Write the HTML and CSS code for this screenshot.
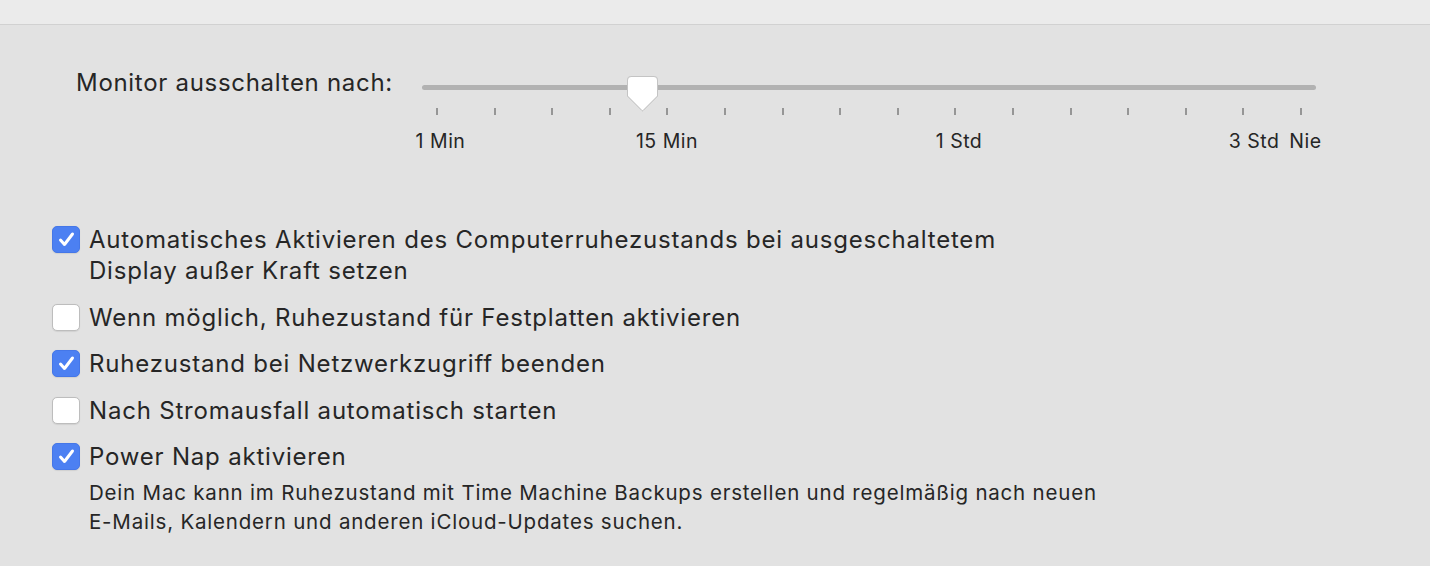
FILE: index.html
```
<!DOCTYPE html>
<html lang="de">
<head>
  <meta charset="UTF-8">
  <title>Energie sparen</title>
  <link rel="stylesheet" href="styles.css">
</head>
<body>
  <div class="toolbar"></div>
  <div class="panel">
    <div class="slider-row">
      <div class="slider-label">Monitor ausschalten nach:</div>
      <div class="slider">
        <div class="track"></div>
        <div class="thumb">
          <svg width="33" height="37" viewBox="0 0 33 37">
            <path d="M5 1.5 H28 Q31.5 1.5 31.5 5 V21 L17 35.5 Q16.5 36 16 35.5 L1.5 21 V5 Q1.5 1.5 5 1.5 Z" fill="#fff" stroke="#c4c4c4" stroke-width="1"/>
          </svg>
        </div>
        <div class="ticks">
          <span></span><span></span><span></span><span></span>
          <span></span><span></span><span></span><span></span>
          <span></span><span></span><span></span><span></span>
          <span></span><span></span><span></span><span></span>
        </div>
        <div class="scale">
          <span class="mark" style="left: 18.5px">1 Min</span>
          <span class="mark" style="left: 245px">15 Min</span>
          <span class="mark" style="left: 537px">1 Std</span>
          <span class="mark" style="left: 832px">3 Std</span>
          <span class="mark" style="left: 883.5px">Nie</span>
        </div>
      </div>
    </div>

    <ul class="options">
      <li class="option">
        <span class="box checked">
          <svg width="27" height="27" viewBox="0 0 27 27"><path d="M7.5 14 L11.5 18.5 L19.5 8" fill="none" stroke="#fff" stroke-width="3" stroke-linecap="round" stroke-linejoin="round"/></svg>
        </span>
        <span class="text">Automatisches Aktivieren des Computerruhezustands bei ausgeschaltetem<br>Display außer Kraft setzen</span>
      </li>
      <li class="option">
        <span class="box"></span>
        <span class="text">Wenn möglich, Ruhezustand für Festplatten aktivieren</span>
      </li>
      <li class="option">
        <span class="box checked">
          <svg width="27" height="27" viewBox="0 0 27 27"><path d="M7.5 14 L11.5 18.5 L19.5 8" fill="none" stroke="#fff" stroke-width="3" stroke-linecap="round" stroke-linejoin="round"/></svg>
        </span>
        <span class="text">Ruhezustand bei Netzwerkzugriff beenden</span>
      </li>
      <li class="option">
        <span class="box"></span>
        <span class="text">Nach Stromausfall automatisch starten</span>
      </li>
      <li class="option">
        <span class="box checked">
          <svg width="27" height="27" viewBox="0 0 27 27"><path d="M7.5 14 L11.5 18.5 L19.5 8" fill="none" stroke="#fff" stroke-width="3" stroke-linecap="round" stroke-linejoin="round"/></svg>
        </span>
        <div class="text">
          Power Nap aktivieren
          <p class="hint">Dein Mac kann im Ruhezustand mit Time Machine Backups erstellen und regelmäßig nach neuen<br>E-Mails, Kalendern und anderen iCloud-Updates suchen.</p>
        </div>
      </li>
    </ul>
  </div>
</body>
</html>
```

FILE: styles.css
```
html, body {
  margin: 0;
  height: 100%;
}
body {
  background: #e2e2e2;
  font-family: Inter, "Noto Sans", sans-serif;
  color: #262626;
  overflow: hidden;
}
.toolbar {
  height: 24px;
  background: #ebebeb;
  border-bottom: 1px solid #d1d1d1;
}
.panel {
  padding: 44px 0 0 52px;
}
.slider-row {
  display: flex;
}
.slider-label {
  width: 346px;
  padding-left: 24px;
  font-size: 24px;
  line-height: 28px;
  letter-spacing: 0.7px;
  white-space: nowrap;
}
.slider {
  position: relative;
  width: 894px;
  padding-top: 16px;
}
.track {
  height: 5px;
  border-radius: 3px;
  background: #b2b2b2;
}
.thumb {
  position: absolute;
  top: 6px;
  left: 204px;
  line-height: 0;
  filter: drop-shadow(0 0.5px 0.5px rgba(0, 0, 0, 0.15));
}
.ticks {
  display: flex;
  justify-content: space-between;
  width: 866px;
  margin: 18px 0 0 14px;
}
.ticks span {
  width: 2px;
  height: 7px;
  background: #969696;
}
.scale {
  position: relative;
  height: 24px;
  margin-top: 14px;
}
.mark {
  position: absolute;
  top: 0;
  transform: translateX(-50%);
  font-size: 19.5px;
  line-height: 24px;
  letter-spacing: 0.5px;
  white-space: nowrap;
}
.options {
  list-style: none;
  margin: 71px 0 0;
  padding: 0;
  display: flex;
  flex-direction: column;
  gap: 15.5px;
}
.option {
  display: flex;
  align-items: flex-start;
  gap: 9px;
  font-size: 24px;
  line-height: 31px;
  letter-spacing: 0.8px;
}
.box {
  flex: none;
  box-sizing: border-box;
  width: 28px;
  height: 27px;
  margin-top: 2px;
  border-radius: 5px;
  background: #fff;
  border: 1px solid #bdbdbd;
  box-shadow: 0 0.5px 1px rgba(0, 0, 0, 0.08);
  line-height: 0;
}
.box.checked {
  background: #4c80f2;
  border-color: #4577e8;
}
.box svg {
  margin: -1px 0 0 0;
}
.hint {
  margin: 6px 0 0;
  font-size: 20.5px;
  line-height: 29px;
  letter-spacing: 0.8px;
  white-space: nowrap;
}
```
